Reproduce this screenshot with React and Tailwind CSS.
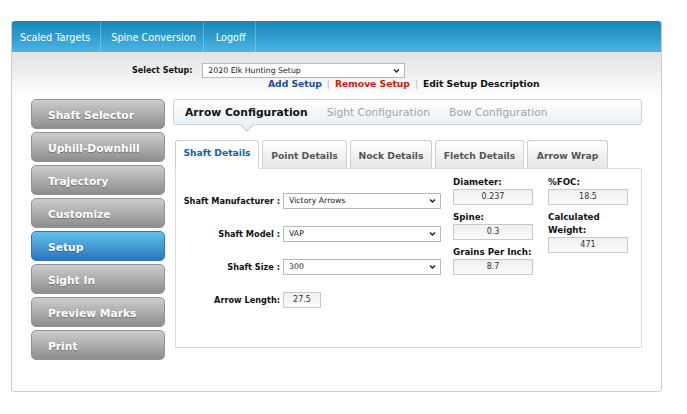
import React from 'react';

const sideItems = [
  'Shaft Selector',
  'Uphill-Downhill',
  'Trajectory',
  'Customize',
  'Setup',
  'Sight In',
  'Preview Marks',
  'Print',
];

const tabs = [
  { label: 'Shaft Details', w: 'w-[84px]', active: true },
  { label: 'Point Details', w: 'w-[85px]' },
  { label: 'Nock Details', w: 'w-[82px]' },
  { label: 'Fletch Details', w: 'w-[89px]' },
  { label: 'Arrow Wrap', w: 'w-[81px]' },
];

function Chevron() {
  return (
    <svg width="7" height="5" viewBox="0 0 7 5" className="absolute right-[4px] top-1/2 -translate-y-1/2">
      <path d="M1 1 L3.5 3.6 L6 1" fill="none" stroke="#222" strokeWidth="1.4" />
    </svg>
  );
}

function FakeSelect({ value, className }) {
  return (
    <div className={`relative flex items-center pl-[5px] border border-[#b8b8b8] bg-white text-[7.8px] text-[#222] ${className}`}>
      {value}
      <Chevron />
    </div>
  );
}

function ValueBox({ value, className = 'w-[80px]' }) {
  return (
    <div
      className={`h-[16px] flex items-center justify-center border border-[#c9c9c9] bg-[linear-gradient(#efefef,#fbfbfb)] text-[8px] text-[#333] ${className}`}
    >
      {value}
    </div>
  );
}

function Field({ label, value, first }) {
  return (
    <div className={first ? '' : 'mt-[6px]'}>
      <div className="text-[8.7px] leading-[13px] font-bold text-[#111]">{label}</div>
      <ValueBox value={value} />
    </div>
  );
}

function FormRow({ label, children }) {
  return (
    <div className="flex items-center h-[16px]">
      <div className="w-[104px] text-right text-[8.2px] font-bold text-[#111] whitespace-nowrap">{label}</div>
      <div className="ml-[3px]">{children}</div>
    </div>
  );
}

export default function App() {
  return (
    <div className="w-[687px] h-[414px] bg-white pt-[21px] pl-[11px] font-['DejaVu_Sans',Verdana,sans-serif]">
      <div className="w-[651px] h-[371px] border-x border-b border-[#cdcdcd] rounded-b-[4px] flex flex-col overflow-hidden">
        {/* top nav */}
        <div className="h-[31px] flex bg-[linear-gradient(#1386b9,#4db3e4)] rounded-t-[3px] text-white text-[9.7px]">
          <div className="flex items-center pt-[3px] pl-[8px] pr-[10px] border-r border-white/25">Scaled Targets</div>
          <div className="flex items-center pt-[3px] pl-[10px] pr-[7px] border-r border-white/25">Spine Conversion</div>
          <div className="flex items-center pt-[3px] pl-[12px] pr-[9px] border-r border-white/25">Logoff</div>
        </div>

        <div className="flex-1 bg-[linear-gradient(#e2e2e2,#ffffff_46px)]">
          {/* setup selector */}
          <div className="flex items-center mt-[11px] h-[15px] pl-[120px]">
            <span className="text-[8px] font-bold text-[#111]">Select Setup:</span>
            <FakeSelect value="2020 Elk Hunting Setup" className="ml-[10px] w-[203px] h-[15px]" />
          </div>
          <div className="flex items-center h-[12px] pl-[256px] gap-[5px] text-[9.2px] font-bold">
            <span className="text-[#1b4f98]">Add Setup</span>
            <span className="text-[#bbb] font-normal">|</span>
            <span className="text-[#d21a10]">Remove Setup</span>
            <span className="text-[#bbb] font-normal">|</span>
            <span className="text-[#111]">Edit Setup Description</span>
          </div>

          {/* main */}
          <div className="flex mt-[9px] pl-[19px]">
            <div className="w-[134px] flex flex-col gap-[3px]">
              {sideItems.map((item) => (
                <div
                  key={item}
                  className={`h-[30px] flex items-center pt-[4px] pl-[16px] rounded-[5px] border text-white text-[10.7px] font-bold [text-shadow:0_1px_1px_rgba(0,0,0,0.3)] ${
                    item === 'Setup'
                      ? 'bg-[linear-gradient(#62c1eb,#2a76bf)] border-[#2f78bd]'
                      : 'bg-[linear-gradient(#cdcdcd,#8d8d8d)] border-[#939393]'
                  }`}
                >
                  {item}
                </div>
              ))}
            </div>

            <div className="ml-[8px] w-[469px]">
              {/* config bar */}
              <div className="relative h-[26px] flex items-center pt-[3px] pl-[11px] gap-[19px] border border-[#d0d0d0] rounded-[3px] bg-[linear-gradient(#ffffff,#e9f0f7)]">
                <span className="text-[10.75px] font-bold text-[#111]">Arrow Configuration</span>
                <span className="text-[10.7px] text-[#a3a3a3]">Sight Configuration</span>
                <span className="text-[10.7px] text-[#a3a3a3]">Bow Configuration</span>
                <div className="absolute left-[65px] top-full w-0 h-0 border-x-[8px] border-x-transparent border-t-[8px] border-t-[#d0d0d0]" />
                <div className="absolute left-[66px] top-full -mt-px w-0 h-0 border-x-[7px] border-x-transparent border-t-[7px] border-t-[#e9f0f7]" />
              </div>

              {/* tabs */}
              <div className="ml-[2px] mt-[15px]">
                <div className="flex items-end gap-[3px] h-[28px]">
                  {tabs.map((t) =>
                    t.active ? (
                      <div
                        key={t.label}
                        className={`${t.w} h-[29px] -mb-px relative z-10 flex items-center justify-center pb-[3px] border border-[#cfcfcf] border-b-white rounded-t-[3px] bg-white text-[9.2px] font-bold text-[#1c5ea3]`}
                      >
                        {t.label}
                      </div>
                    ) : (
                      <div
                        key={t.label}
                        className={`${t.w} h-[28px] flex items-center justify-center pt-[3px] border border-b-0 border-[#cfcfcf] rounded-t-[3px] bg-[linear-gradient(#ffffff,#e6e6e6)] text-[9.2px] font-bold text-[#555]`}
                      >
                        {t.label}
                      </div>
                    )
                  )}
                </div>
                <div className="w-[467px] h-[180px] border border-[#dcdcdc] bg-white flex">
                  <div className="pt-[24px] flex flex-col gap-[17px]">
                    <FormRow label="Shaft Manufacturer :">
                      <FakeSelect value="Victory Arrows" className="w-[158px] h-[16px]" />
                    </FormRow>
                    <FormRow label="Shaft Model :">
                      <FakeSelect value="VAP" className="w-[158px] h-[16px]" />
                    </FormRow>
                    <FormRow label="Shaft Size :">
                      <FakeSelect value="300" className="w-[158px] h-[16px]" />
                    </FormRow>
                    <FormRow label="Arrow Length:">
                      <ValueBox value="27.5" className="w-[38px]" />
                    </FormRow>
                  </div>
                  <div className="ml-[12px] pt-[7px] w-[80px]">
                    <Field label="Diameter:" value="0.237" first />
                    <Field label="Spine:" value="0.3" />
                    <Field label={<span className="whitespace-nowrap">Grains Per Inch:</span>} value="8.7" />
                  </div>
                  <div className="ml-[15px] pt-[7px] w-[80px]">
                    <Field label="%FOC:" value="18.5" first />
                    <Field label="Calculated Weight:" value="471" />
                  </div>
                </div>
              </div>
            </div>
          </div>
        </div>
      </div>
    </div>
  );
}
